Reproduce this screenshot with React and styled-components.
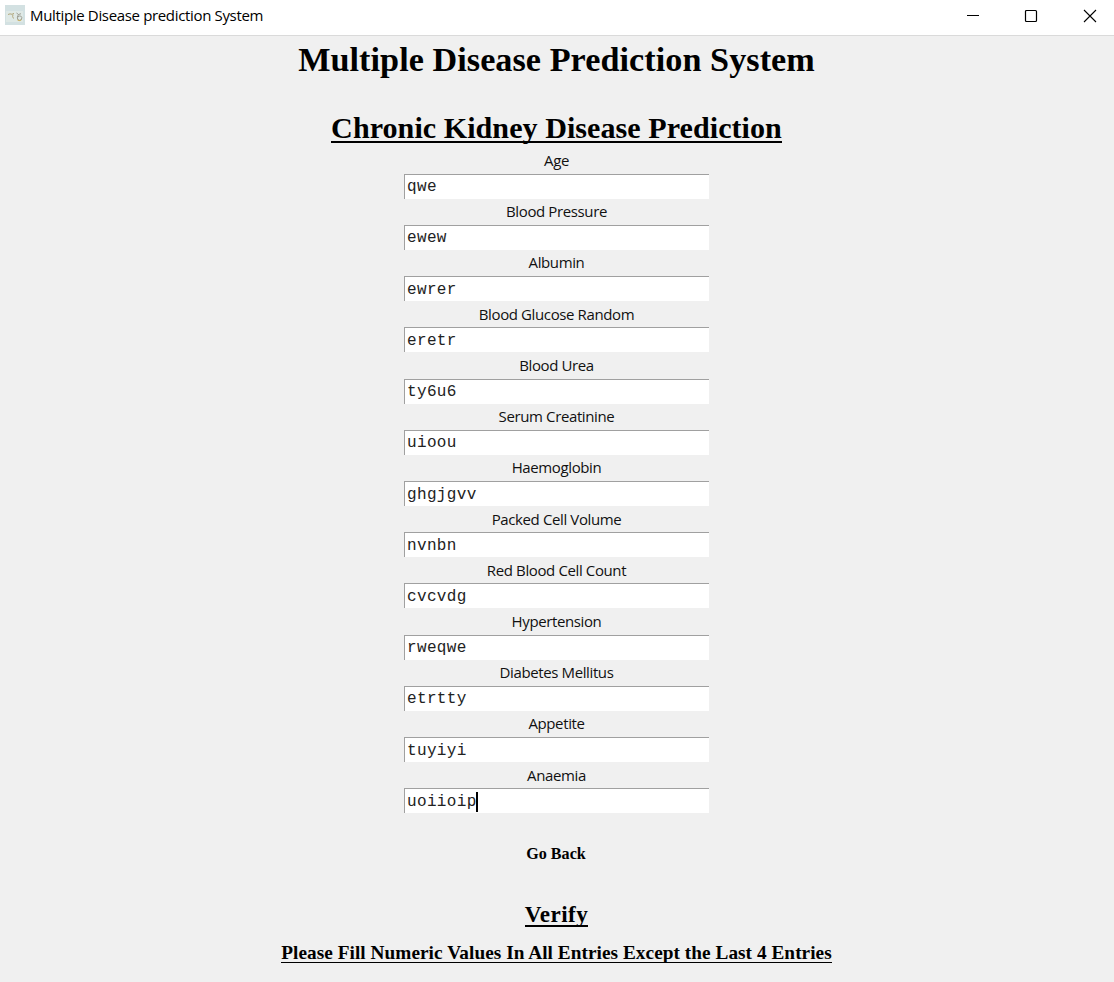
import React from "react";
import styled, { createGlobalStyle } from "styled-components";

const GlobalStyle = createGlobalStyle`
  * { box-sizing: border-box; }
  body { margin: 0; background: #f0f0f0; overflow: hidden; }
`;

const Window = styled.div`
  width: 1114px;
  height: 982px;
  display: flex;
  flex-direction: column;
  background: #f0f0f0;
  color: #000;
`;

const TitleBar = styled.header`
  height: 36px;
  flex: none;
  display: flex;
  align-items: flex-start;
  justify-content: space-between;
  padding-left: 5px;
  background: #fff;
  border-bottom: 1px solid #dadada;
`;

const Caption = styled.div`
  display: flex;
  align-items: flex-start;
  gap: 5px;
  padding-top: 5px;
  font: 15px/20px "Open Sans", sans-serif;
  letter-spacing: -0.34px;
  white-space: nowrap;
`;

const Controls = styled.div`
  display: flex;
  gap: 10.5px;
`;

const ControlButton = styled.button`
  width: 48px;
  height: 32px;
  padding: 0;
  border: 0;
  background: none;
  display: grid;
  place-items: center;
`;

const Content = styled.main`
  flex: 1;
  display: flex;
  flex-direction: column;
  align-items: center;
  padding-right: 1px;
`;

const Heading = styled.h1`
  margin: ${(p) => p.$top}px 0 0;
  font: bold ${(p) => p.$size}px/${(p) => p.$line}px "Liberation Serif", serif;
  letter-spacing: ${(p) => p.$spacing || 0}px;
  white-space: nowrap;
`;

const Underlined = styled(Heading)`
  height: ${(p) => p.$box}px;
  border-bottom: ${(p) => p.$rule}px solid #000;
`;

const Form = styled.form`
  width: 305px;
  margin-top: 6px;
  display: flex;
  flex-direction: column;
`;

const Field = styled.label`
  height: 51.23px;
  display: flex;
  flex-direction: column;
  align-items: center;
`;

const Label = styled.span`
  height: 24.7px;
  font: 15px/23px "Open Sans", sans-serif;
  letter-spacing: -0.38px;
  white-space: nowrap;
  color: #111;
`;

const Entry = styled.div`
  width: 100%;
  height: 25px;
  display: flex;
  align-items: center;
  padding: 1px 0 0 2px;
  background: #fff;
  border-top: 1px solid #a0a0a0;
  border-left: 1px solid #a0a0a0;
  font: 16px/20px "Liberation Mono", monospace;
  letter-spacing: 0.34px;
  color: #222;
`;

const Caret = styled.i`
  width: 2px;
  height: 20px;
  margin-left: -1px;
  background: #000;
`;

const GoBack = styled.button`
  margin: 28px 1px 0 0;
  padding: 0;
  border: 0;
  background: none;
  color: #000;
  font: bold 16.1px/22px "Liberation Serif", serif;
`;

const fields = [
  ["Age", "qwe"],
  ["Blood Pressure", "ewew"],
  ["Albumin", "ewrer"],
  ["Blood Glucose Random", "eretr"],
  ["Blood Urea", "ty6u6"],
  ["Serum Creatinine", "uioou"],
  ["Haemoglobin", "ghgjgvv"],
  ["Packed Cell Volume", "nvnbn"],
  ["Red Blood Cell Count", "cvcvdg"],
  ["Hypertension", "rweqwe"],
  ["Diabetes Mellitus", "etrtty"],
  ["Appetite", "tuyiyi"],
  ["Anaemia", "uoiioip"],
];

const AppIcon = () => (
  <svg width="20" height="20" viewBox="0 0 20 20" fill="none">
    <rect width="20" height="20" fill="#d3e1e2" />
    <rect x="1" y="6" width="17" height="11" fill="#dfe9e6" />
    <path d="M3 9.500q2-1.200 4-.2l2-1M8 9.500q-1 2 .5 4" stroke="#b3a87c" />
    <path d="M11.500 8l2 1.500q-2 2.500-.8 5 2 1.800 3.800 0 1-2.500-.8-3.500-1.500-.4-2.700 1M13.500 9.500l2.500-.8" stroke="#96968a" strokeWidth="0.900" />
    <path d="M12.500 15q1.800 1.200 3.800 0" stroke="#cdb25c" />
  </svg>
);

export default function App() {
  return (
    <Window>
      <GlobalStyle />
      <TitleBar>
        <Caption>
          <AppIcon />
          Multiple Disease prediction System
        </Caption>
        <Controls>
          <ControlButton aria-label="Minimize">
            <svg width="14" height="14" fill="none" stroke="#000"><path d="M1 6.500h12" /></svg>
          </ControlButton>
          <ControlButton aria-label="Maximize">
            <svg width="15" height="14" fill="none" stroke="#000" strokeWidth="1.200"><rect x="1.500" y="1.500" width="11" height="11" rx="1" /></svg>
          </ControlButton>
          <ControlButton aria-label="Close">
            <svg width="14" height="14" fill="none" stroke="#000" strokeWidth="1.100"><path d="M1 1l12 12M13 1L1 13" /></svg>
          </ControlButton>
        </Controls>
      </TitleBar>
      <Content>
        <Heading $top={4} $size={34.2} $line={40} $spacing={0.05}>Multiple Disease Prediction System</Heading>
        <Underlined as="h2" $top={31} $size={30.1} $line={34} $box={32} $rule={2} $spacing={0.04}>Chronic Kidney Disease Prediction</Underlined>
        <Form>
          {fields.map(([name, value], i) => (
            <Field key={name}>
              <Label>{name}</Label>
              <Entry>
                {value}
                {i === fields.length - 1 && <Caret />}
              </Entry>
            </Field>
          ))}
        </Form>
        <GoBack type="button">Go Back</GoBack>
        <Underlined as="h3" $top={37} $size={23.1} $line={24} $box={25} $rule={2} $spacing={0.45}>Verify</Underlined>
        <Underlined as="p" $top={17} $size={19.28} $line={18} $box={19} $rule={1} $spacing={0.045}>
          Please Fill Numeric Values In All Entries Except the Last 4 Entries
        </Underlined>
      </Content>
    </Window>
  );
}
